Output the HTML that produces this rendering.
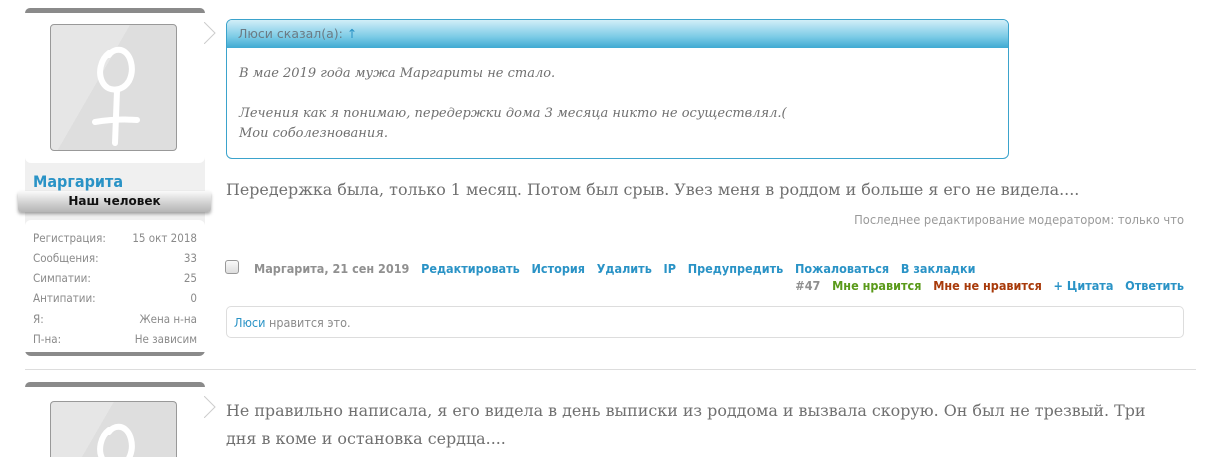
<!DOCTYPE html>
<html><head><meta charset="utf-8"><style>
*{margin:0;padding:0;box-sizing:border-box}
html,body{width:1232px;height:457px;overflow:hidden}
body{background:#fff;position:relative;font-family:"DejaVu Sans","Liberation Sans",sans-serif;}
.abs{position:absolute}
.side{left:25px;width:180px;background:#f0f0f0;border-top:5px solid #8a8a8a;border-radius:5px 5px 0 0;}
.wbox{background:#fff;border-radius:0 0 6px 6px;}
.av{left:50px;width:127px;height:127px;border:1px solid #999;border-radius:4px;background:linear-gradient(120deg,#e6e6e6 40%,#dedede 40%);overflow:hidden}
.serif{font-family:"DejaVu Serif","Liberation Serif",serif;color:#707070}
.st{font-size:11.5px;color:#8a8a8a;left:33px;width:164px;display:flex;justify-content:space-between;font-family:"DejaVu Sans Condensed","DejaVu Sans",sans-serif}
.lnk{color:#2a93c6;font-weight:bold;font-size:12.5px;font-family:"DejaVu Sans Condensed","DejaVu Sans",sans-serif}
</style></head><body>
<div class="abs side" style="top:8px;height:348px;border-bottom:4px solid #8a8a8a;border-radius:5px 5px 6px 6px"></div>
<div class="abs wbox" style="left:25px;top:13px;width:180px;height:150px"></div>
<div class="abs av" style="top:24px">
<svg width="127" height="127" viewBox="0 0 127 127"><g fill="none" stroke="#fff" stroke-width="6" stroke-linecap="round"><path d="M58 28 C50 34 46 48 52 58 C58 68 72 66 78 56 C84 44 80 28 70 25 C64 24 60 27 58 30"/><path d="M66 66 L64 118"/><path d="M44 97 C56 95 72 94 86 95"/></g></svg></div>
<div class="abs" style="left:33px;top:172px;font-size:16px;font-weight:bold;color:#2a93c6;font-family:'DejaVu Sans Condensed','DejaVu Sans',sans-serif">Маргарита</div>
<div class="abs" style="left:18px;top:191px;width:193px;height:21px;border-radius:3px;background:linear-gradient(#fafafa,#cfcfcf 60%,#b5b5b5);box-shadow:0 2px 3px rgba(0,0,0,.35);text-align:center;font-size:12px;font-weight:bold;line-height:21px;color:#111">Наш человек</div>
<div class="abs wbox" style="left:25px;top:220px;width:180px;height:132px;border-radius:6px 6px 0 0"></div>
<div class="abs st" style="top:231px"><span>Регистрация:</span><span>15 окт 2018</span></div>
<div class="abs st" style="top:251px"><span>Сообщения:</span><span>33</span></div>
<div class="abs st" style="top:271px"><span>Симпатии:</span><span>25</span></div>
<div class="abs st" style="top:291px"><span>Антипатии:</span><span>0</span></div>
<div class="abs st" style="top:312px"><span>Я:</span><span>Жена н-на</span></div>
<div class="abs st" style="top:332px"><span>П-на:</span><span>Не зависим</span></div>
<svg class="abs" style="left:204px;top:22px" width="12" height="22"><path d="M0 0 L11 11 L0 22" fill="#fff" stroke="#ccc"/></svg>
<div class="abs" style="left:226px;top:19px;width:783px;height:140px;border:1px solid #3ba3cc;border-radius:6px;overflow:hidden">
<div style="height:28px;background:linear-gradient(#d2eef8,#7ccbe6 60%,#3fa9d2);font-size:12.5px;color:#6b7b84;padding:6px 0 0 11px">Люси сказал(а): <span style="color:#2a93c6">↑</span></div>
<div class="serif" style="font-style:italic;font-size:13px;line-height:20px;padding:16px 0 0 12px">В мае 2019 года мужа Маргариты не стало.<br><br>Лечения как я понимаю, передержки дома 3 месяца никто не осуществлял.(<br>Мои соболезнования.</div>
</div>
<div class="abs serif" style="left:226px;top:180px;font-size:15.9px;white-space:nowrap">Передержка была, только 1 месяц. Потом был срыв. Увез меня в роддом и больше я его не видела....</div>
<div class="abs" style="right:48px;top:213px;font-size:12.8px;color:#9a9a9a;font-family:'DejaVu Sans Condensed','DejaVu Sans',sans-serif">Последнее редактирование модератором: только что</div>
<div class="abs" style="left:225px;top:260px;width:14px;height:14px;border:1px solid #999;border-radius:3px;background:linear-gradient(#fafafa,#ddd)"></div>
<div class="abs lnk" style="left:254px;top:261px;white-space:nowrap"><span style="color:#909090">Маргарита, 21 сен 2019</span>&nbsp;&nbsp; Редактировать &nbsp; История &nbsp; Удалить &nbsp; IP &nbsp; Предупредить &nbsp; Пожаловаться &nbsp; В закладки</div>
<div class="abs lnk" style="right:48px;top:278px;white-space:nowrap"><span style="color:#909090">#47</span> &nbsp; <span style="color:#5a9a1a">Мне нравится</span> &nbsp; <span style="color:#a83a0a">Мне не нравится</span> &nbsp; + Цитата &nbsp; Ответить</div>
<div class="abs" style="left:226px;top:306px;width:958px;height:32px;border:1px solid #ddd;border-radius:5px;font-size:12.5px;color:#8a8a8a;padding:8px 0 0 7px;font-family:'DejaVu Sans Condensed','DejaVu Sans',sans-serif"><span style="color:#2a93c6">Люси</span> нравится это.</div>
<div class="abs" style="left:25px;top:369px;width:1171px;height:1px;background:#ddd"></div>
<div class="abs side" style="top:382px;height:75px;border-radius:5px 5px 0 0"></div>
<div class="abs wbox" style="left:25px;top:387px;width:180px;height:70px;border-radius:0"></div>
<div class="abs av" style="top:401px;height:56px;border-bottom:none;border-radius:4px 4px 0 0">
<svg width="127" height="56" viewBox="0 0 127 56"><g fill="none" stroke="#fff" stroke-width="6" stroke-linecap="round"><path d="M58 28 C50 34 46 48 52 58 C58 68 72 66 78 56 C84 44 80 28 70 25 C64 24 60 27 58 30"/></g></svg></div>
<svg class="abs" style="left:204px;top:396px" width="12" height="22"><path d="M0 0 L11 11 L0 22" fill="#fff" stroke="#ccc"/></svg>
<div class="abs serif" style="left:226px;top:397px;width:945px;font-size:15.9px;line-height:28px">Не правильно написала, я его видела в день выписки из роддома и вызвала скорую. Он был не трезвый. Три дня в коме и остановка сердца....</div>
</body></html>
